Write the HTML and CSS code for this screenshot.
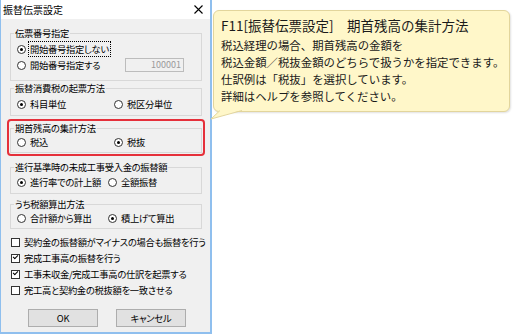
FILE: index.html
```html
<!DOCTYPE html>
<html lang="ja">
<head>
    <meta charset="UTF-8">
    <title>振替伝票設定</title>
    <link rel="stylesheet" href="styles.css">
</head>
<body>
    <div class="dialog">
        <div class="titlebar">
            <span class="title">振替伝票設定</span>
            <svg class="close" width="9" height="9" viewBox="0 0 9 9"><path d="M0.5 0.5 L8.5 8.5 M8.5 0.5 L0.5 8.5" stroke="#000" stroke-width="1.1" fill="none"/></svg>
        </div>

        <div class="client">
            <fieldset class="group group-number">
                <legend>伝票番号指定</legend>
                <div class="options options-number">
                    <div class="opt"><span class="radio checked"></span><span class="focus">開始番号指定しない</span></div>
                    <div></div>
                    <div class="opt"><span class="radio"></span>開始番号指定する</div>
                    <div class="numbox">100001</div>
                </div>
            </fieldset>

            <fieldset class="group group-tax">
                <legend>振替消費税の起票方法</legend>
                <div class="options">
                    <div class="opt"><span class="radio checked"></span>科目単位</div>
                    <div class="opt"><span class="radio"></span>税区分単位</div>
                </div>
            </fieldset>

            <div class="highlight">
                <fieldset class="group group-opening">
                    <legend>期首残高の集計方法</legend>
                    <div class="options">
                        <div class="opt"><span class="radio"></span>税込</div>
                        <div class="opt"><span class="radio checked"></span>税抜</div>
                    </div>
                </fieldset>
            </div>

            <fieldset class="group group-progress">
                <legend>進行基準時の未成工事受入金の振替額</legend>
                <div class="options options-narrow">
                    <div class="opt"><span class="radio checked"></span>進行率での計上額</div>
                    <div class="opt"><span class="radio"></span>全額振替</div>
                </div>
            </fieldset>

            <fieldset class="group group-calc">
                <legend>うち税額算出方法</legend>
                <div class="options options-narrow">
                    <div class="opt"><span class="radio"></span>合計額から算出</div>
                    <div class="opt"><span class="radio checked"></span>積上げて算出</div>
                </div>
            </fieldset>

            <div class="checks">
                <div class="check-row"><span class="check"></span>契約金の振替額がマイナスの場合も振替を行う</div>
                <div class="check-row"><span class="check checked"></span>完成工事高の振替を行う</div>
                <div class="check-row"><span class="check checked"></span>工事未収金/完成工事高の仕訳を起票する</div>
                <div class="check-row"><span class="check"></span>完工高と契約金の税抜額を一致させる</div>
            </div>

            <div class="buttons">
                <button class="btn btn-default">OK</button>
                <button class="btn">キャンセル</button>
            </div>
        </div>
    </div>

    <div class="callout">
        <div class="callout-title">F11[振替伝票設定]　期首残高の集計方法</div>
        <p class="callout-body">税込経理の場合、期首残高の金額を<br>税込金額／税抜金額のどちらで扱うかを指定できます。<br>仕訳例は「税抜」を選択しています。<br>詳細はヘルプを参照してください。</p>
        <svg class="callout-tail" width="34" height="10" viewBox="0 0 34 10">
            <polygon points="10,0 32,0 1,9" fill="#fff7c9"/>
            <polyline points="10,0.5 1,9 32,0.5" fill="none" stroke="#e2d59c" stroke-width="1"/>
        </svg>
    </div>
</body>
</html>
```

FILE: styles.css
```css
body {
    margin: 0;
    background-color: #fff;
    display: flex;
    align-items: flex-start;
    font-family: "Noto Sans CJK JP", "Noto Sans", sans-serif;
}

/* ダイアログ本体 */
.dialog {
    width: 212px;
    height: 334px;
    flex: none;
    box-sizing: border-box;
    border-left: 1px solid #8fbfee;
    border-right: 2px solid #8fbfee;
    border-bottom: 2px solid #8fbfee;
    display: flex;
    flex-direction: column;
    font-size: 9.3px;
    letter-spacing: -0.3px;
    font-feature-settings: "palt";
    color: #000;
}

.titlebar {
    height: 19px;
    flex: none;
    background-color: #fff;
    display: flex;
    align-items: center;
    justify-content: space-between;
    padding: 0 7px 0 2px;
}

.title {
    font-size: 10px;
    line-height: 12px;
    letter-spacing: 0;
}

.client {
    flex: 1;
    background-color: #f0f0f0;
    padding: 0 8px 0 9px;
    overflow: hidden;
}

.group {
    margin: 0;
    padding: 2px 6px 3px;
    min-width: 0;
    border: 1px solid #d8d8d8;
}

.group legend {
    padding: 0 1px;
    margin-left: -3px;
    line-height: 12px;
}

.group-number {
    margin-top: 8px;
    padding-bottom: 7px;
}

.group-tax {
    margin-top: 1px;
}

.group-opening {
    padding-top: 0;
    padding-bottom: 2px;
}

.group-progress {
    margin-top: 5px;
    padding-top: 1px;
}

.group-calc {
    margin-top: 4px;
    padding-top: 0;
    padding-bottom: 2px;
}

/* 赤枠の強調 */
.highlight {
    margin: 3px -3px 0;
    padding: 1px;
    border: 2px solid #e5303a;
    border-radius: 4px;
}

.options {
    display: grid;
    grid-template-columns: 97px 1fr;
    grid-auto-rows: 16px;
    align-items: center;
}

.options-number {
    grid-template-columns: 108px 1fr;
}

.options-narrow {
    grid-template-columns: 91px 1fr;
}

.opt {
    display: flex;
    align-items: center;
    white-space: nowrap;
    line-height: 12px;
}

.radio {
    position: relative;
    width: 9px;
    height: 9px;
    box-sizing: border-box;
    border: 1px solid #333;
    border-radius: 50%;
    background-color: #fff;
    margin-right: 4px;
    flex: none;
}

.radio.checked::after {
    content: "";
    position: absolute;
    left: 2px;
    top: 2px;
    width: 3px;
    height: 3px;
    border-radius: 50%;
    background-color: #000;
}

.focus {
    outline: 1px dotted #000;
    outline-offset: 1px;
}

.numbox {
    width: 59px;
    height: 14px;
    box-sizing: border-box;
    border: 1px solid #bcbcbc;
    background-color: #f0f0f0;
    color: #9a9a9a;
    text-align: right;
    padding-right: 2px;
    line-height: 12px;
    font-size: 9px;
    letter-spacing: 0;
}

/* チェックボックス */
.checks {
    margin-top: 5px;
    padding-left: 1px;
}

.check-row {
    height: 16px;
    line-height: 16px;
    white-space: nowrap;
}

.check {
    display: inline-block;
    position: relative;
    width: 9px;
    height: 9px;
    box-sizing: border-box;
    border: 1px solid #333;
    background-color: #fff;
    margin-right: 4px;
    vertical-align: -1px;
}

.check.checked::after {
    content: "";
    position: absolute;
    left: 1px;
    top: 0;
    width: 4px;
    height: 2px;
    border-left: 1.5px solid #000;
    border-bottom: 1.5px solid #000;
    transform: rotate(-45deg);
}

.buttons {
    margin-top: 11px;
    padding-left: 18px;
    display: flex;
    gap: 18px;
}

.btn {
    width: 70px;
    height: 18px;
    padding: 0;
    border: 1px solid #adadad;
    background-color: #e1e1e1;
    font-family: inherit;
    font-size: 9.3px;
    letter-spacing: -0.3px;
    font-feature-settings: "palt";
    color: #000;
}

/* 吹き出し */
.callout {
    position: relative;
    margin: 10px 0 0 1px;
    width: 297px;
    height: 102px;
    flex: none;
    box-sizing: border-box;
    padding: 5px 6px 0 7px;
    background-color: #fff7c9;
    border: 1px solid #e2d59c;
    border-radius: 6px;
    box-shadow: 1px 1px 2px rgba(0, 0, 0, 0.12);
    color: #1a1a1a;
}

.callout-title {
    font-size: 13.5px;
    line-height: 18px;
    white-space: nowrap;
}

.callout-body {
    margin: 3px 0 0;
    font-size: 11.4px;
    line-height: 17px;
    white-space: nowrap;
}

.callout-tail {
    position: absolute;
    left: -4px;
    top: 100%;
    margin-top: -1px;
}
```
